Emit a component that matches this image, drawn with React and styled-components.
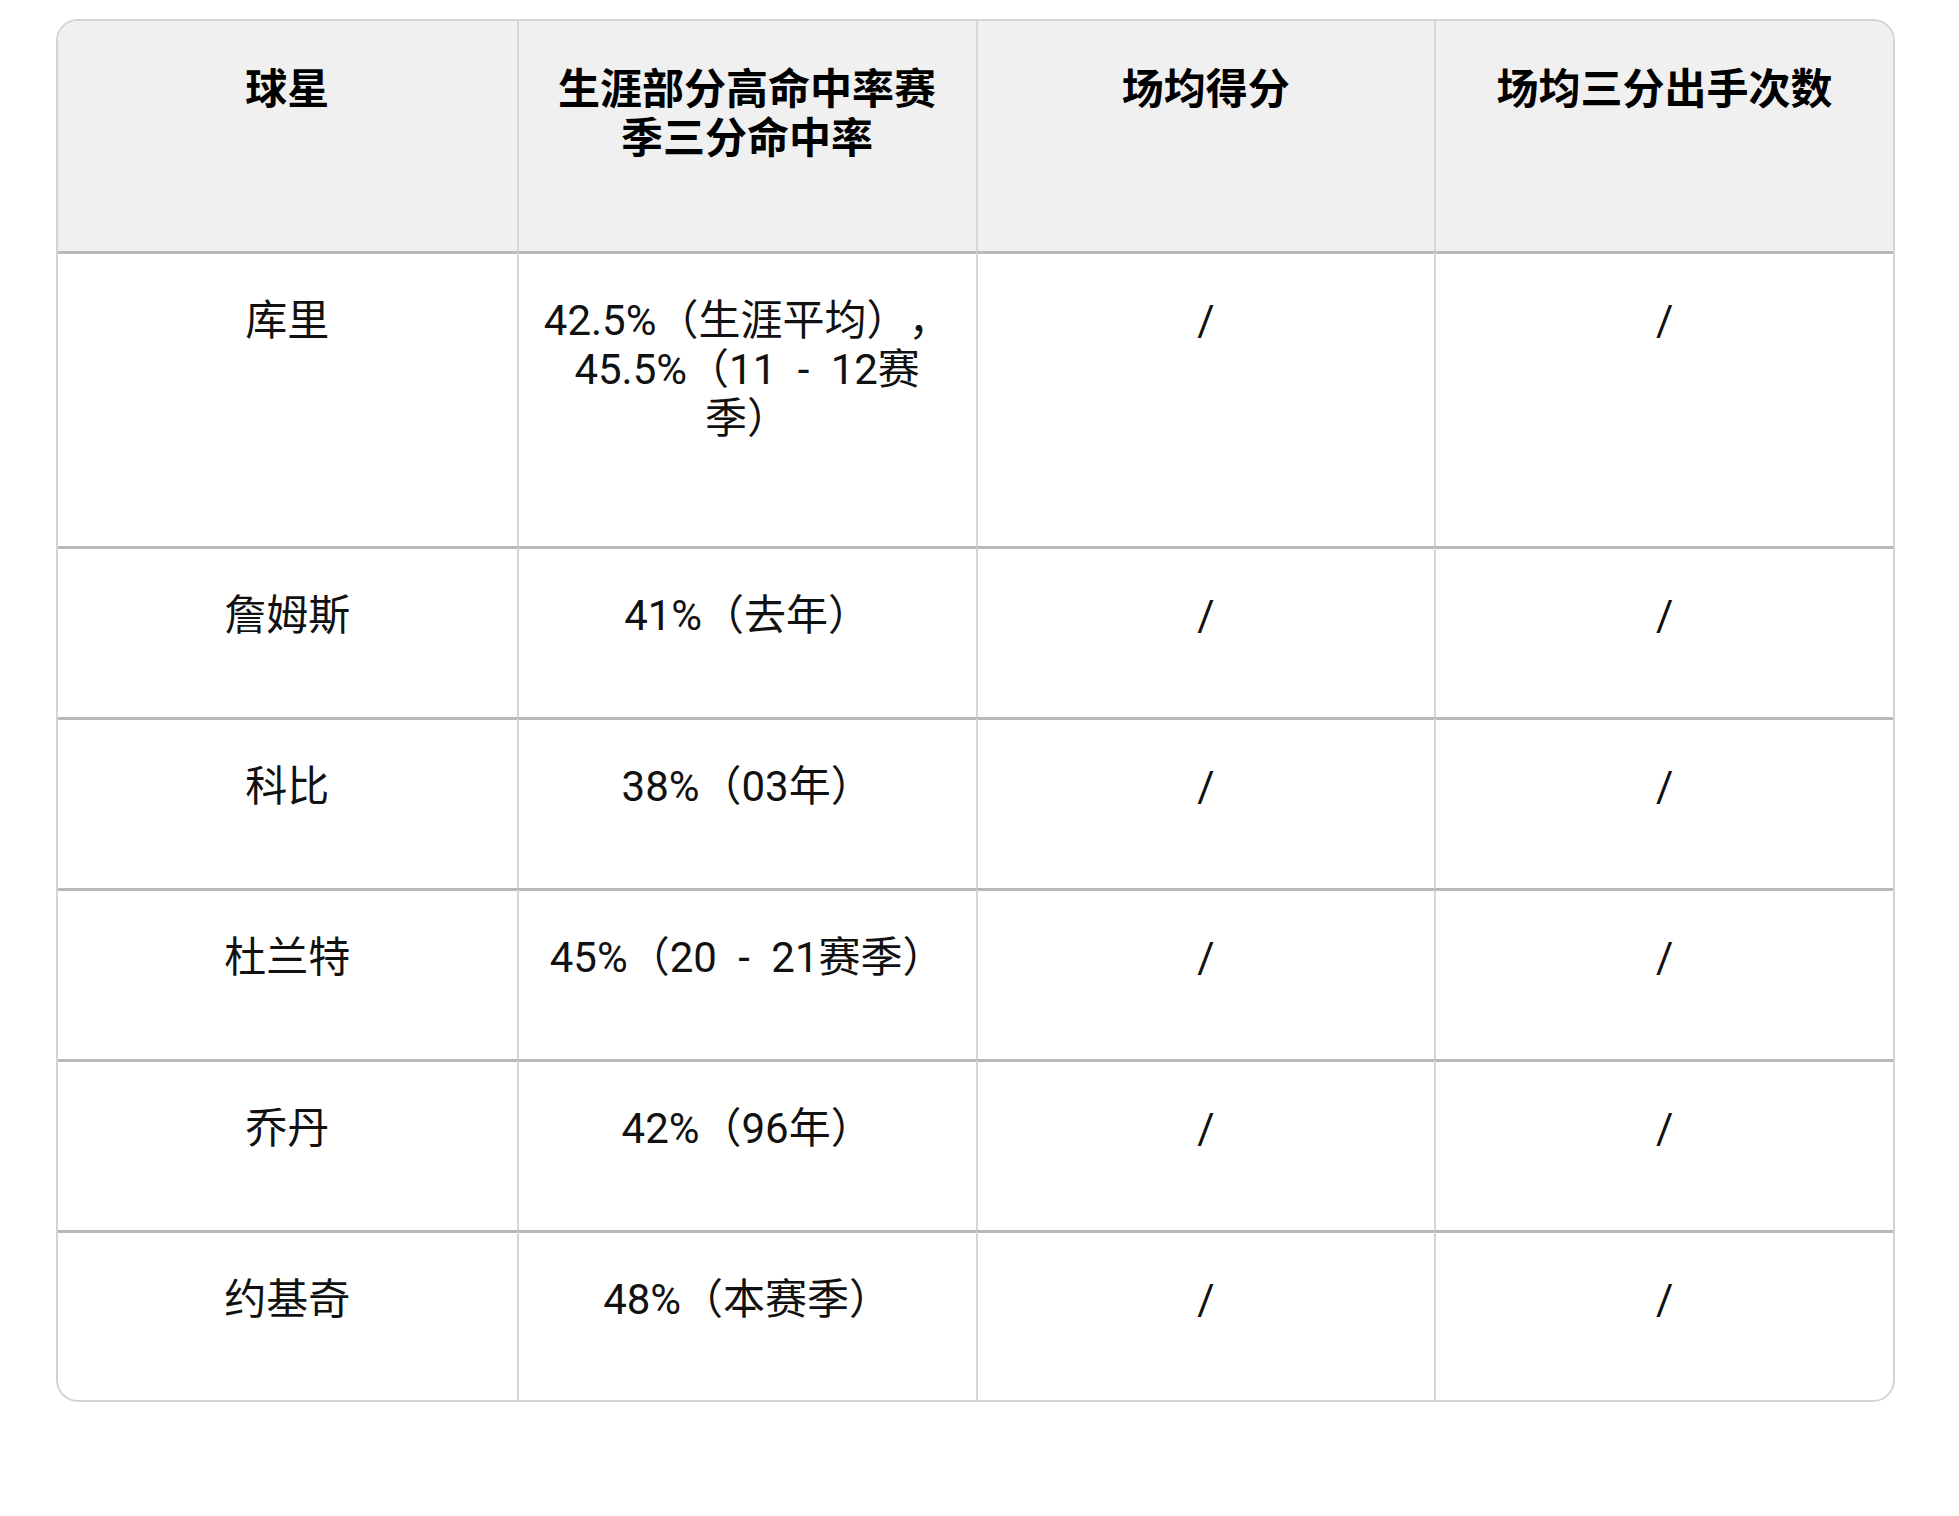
import React from 'react';
import styled, { createGlobalStyle } from 'styled-components';

const GlobalStyle = createGlobalStyle`
    html, body {
        margin: 0;
        padding: 0;
        background: #fff;
    }
    body {
        font-family: Roboto, 'Noto Sans CJK SC', sans-serif;
        color: #111;
        text-spacing-trim: space-all;
    }
`;

const Page = styled.main`
    padding: 19px 64px 113px 56px;
`;

const TableFrame = styled.div`
    border: 2px solid #d3d3d3;
    border-radius: 22px;
    overflow: hidden;
    background: #fff;
`;

const Table = styled.table`
    width: 100%;
    table-layout: fixed;
    border-collapse: separate;
    border-spacing: 0;
`;

const HeadRow = styled.tr`
    height: 230px;
    background: #f0f0f0;
`;

const BodyRow = styled.tr`
    height: ${(props) => props.$h}px;
`;

const HeadCell = styled.th`
    vertical-align: top;
    padding: 40px 22px 0;
    font-family: 'Noto Sans CJK SC', sans-serif;
    font-size: 42px;
    line-height: 49px;
    font-weight: 700;
    color: #000;
    text-align: center;
    border-left: 2px solid #d6d6d6;

    &:first-child {
        border-left: none;
    }
`;

const Cell = styled.td`
    vertical-align: top;
    padding: 42px 22px 0;
    font-size: 42px;
    line-height: 49px;
    font-weight: 400;
    color: #111;
    text-align: center;
    text-spacing-trim: space-all;
    border-top: 3px solid #b9b9b9;
    border-left: 2px solid #d6d6d6;

    &:first-child {
        border-left: none;
    }
`;

const columns = ['球星', '生涯部分高命中率赛季三分命中率', '场均得分', '场均三分出手次数'];

const players = [
    { name: '库里', rate: '42.5%（生涯平均），45.5%（11\u2002-\u200212赛季）', h: 295 },
    { name: '詹姆斯', rate: '41%（去年）', h: 171 },
    { name: '科比', rate: '38%（03年）', h: 171 },
    { name: '杜兰特', rate: '45%（20\u2002-\u200221赛季）', h: 171 },
    { name: '乔丹', rate: '42%（96年）', h: 171 },
    { name: '约基奇', rate: '48%（本赛季）', h: 170 },
];

export default function App() {
    return (
        <>
            <GlobalStyle />
            <Page>
                <TableFrame>
                    <Table>
                        <thead>
                            <HeadRow>
                                {columns.map((c) => (
                                    <HeadCell key={c}>{c}</HeadCell>
                                ))}
                            </HeadRow>
                        </thead>
                        <tbody>
                            {players.map((p) => (
                                <BodyRow key={p.name} $h={p.h}>
                                    <Cell>{p.name}</Cell>
                                    <Cell>{p.rate}</Cell>
                                    <Cell>/</Cell>
                                    <Cell>/</Cell>
                                </BodyRow>
                            ))}
                        </tbody>
                    </Table>
                </TableFrame>
            </Page>
        </>
    );
}
